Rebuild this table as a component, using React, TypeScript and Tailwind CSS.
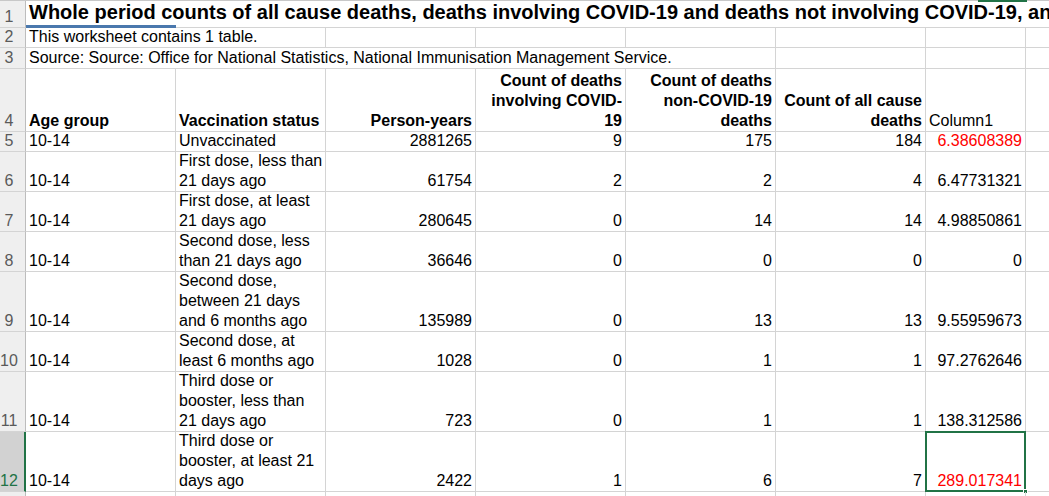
import React from "react";

// Worksheet column widths (A..G)
const COLS = ["w-[150px]", "w-[150px]", "w-[150px]", "w-[150px]", "w-[150px]", "w-[150px]", "w-[100px]"];

type Cell = {
  text?: React.ReactNode;
  align?: "left" | "right";
  bold?: boolean;
  red?: boolean;
};

type Row = {
  num: number;
  h: string;
  cells: Cell[];
  selected?: boolean;
};

const L = (t: React.ReactNode): Cell => ({ text: t, align: "left" });
const R = (t: React.ReactNode, red = false): Cell => ({ text: t, align: "right", red });

const rows: Row[] = [
  {
    num: 5,
    h: "h-[20px]",
    cells: [L("10-14"), L("Unvaccinated"), R("2881265"), R("9"), R("175"), R("184"), R("6.38608389", true)],
  },
  {
    num: 6,
    h: "h-[40px]",
    cells: [
      L("10-14"),
      L(<>First dose, less than<br />21 days ago</>),
      R("61754"),
      R("2"),
      R("2"),
      R("4"),
      R("6.47731321"),
    ],
  },
  {
    num: 7,
    h: "h-[40px]",
    cells: [
      L("10-14"),
      L(<>First dose, at least<br />21 days ago</>),
      R("280645"),
      R("0"),
      R("14"),
      R("14"),
      R("4.98850861"),
    ],
  },
  {
    num: 8,
    h: "h-[40px]",
    cells: [
      L("10-14"),
      L(<>Second dose, less<br />than 21 days ago</>),
      R("36646"),
      R("0"),
      R("0"),
      R("0"),
      R("0"),
    ],
  },
  {
    num: 9,
    h: "h-[60px]",
    cells: [
      L("10-14"),
      L(<>Second dose,<br />between 21 days<br />and 6 months ago</>),
      R("135989"),
      R("0"),
      R("13"),
      R("13"),
      R("9.55959673"),
    ],
  },
  {
    num: 10,
    h: "h-[40px]",
    cells: [
      L("10-14"),
      L(<>Second dose, at<br />least 6 months ago</>),
      R("1028"),
      R("0"),
      R("1"),
      R("1"),
      R("97.2762646"),
    ],
  },
  {
    num: 11,
    h: "h-[60px]",
    cells: [
      L("10-14"),
      L(<>Third dose or<br />booster, less than<br />21 days ago</>),
      R("723"),
      R("0"),
      R("1"),
      R("1"),
      R("138.312586"),
    ],
  },
  {
    num: 12,
    h: "h-[60px]",
    selected: true,
    cells: [
      L("10-14"),
      L(<>Third dose or<br />booster, at least 21<br />days ago</>),
      R("2422"),
      R("1"),
      R("6"),
      R("7"),
      R("289.017341", true),
    ],
  },
];

function RowHead({ num, selected }: { num?: number; selected?: boolean }) {
  return (
    <div
      className={`w-[26px] shrink-0 flex items-end border-b border-b-[#d4d4d4] ${
        selected
          ? "bg-[#d2d2d2] text-[#217346] border-r-2 border-r-[#217346]"
          : "bg-[#efefef] text-[#5a5a5a] border-r border-r-[#bdbdbd]"
      }`}
    >
      <span className="w-[18px] text-center">{num}</span>
    </div>
  );
}

function GridCell({ cell, w, selected }: { cell?: Cell; w: string; selected?: boolean }) {
  return (
    <div
      className={`${w} shrink-0 relative flex items-end px-[3px] border-r border-b border-[#d4d4d4] ${
        cell?.align === "right" ? "justify-end text-right" : "justify-start"
      } ${cell?.bold ? "font-bold" : ""} ${cell?.red ? "text-[#ff0000]" : "text-black"}`}
    >
      <span className="whitespace-nowrap">{cell?.text}</span>
      {selected && (
        <>
          <div className="absolute left-[-1px] top-[-1px] right-[-1px] bottom-[-1px] border-2 border-[#217346]" />
          <div className="absolute right-[-3px] bottom-[-3px] w-[5px] h-[5px] bg-[#217346] border border-white" />
        </>
      )}
    </div>
  );
}

export default function App() {
  const headers: Cell[] = [
    { text: "Age group", align: "left", bold: true },
    { text: "Vaccination status", align: "left", bold: true },
    { text: "Person-years", align: "right", bold: true },
    { text: <>Count of deaths<br />involving COVID-<br />19</>, align: "right", bold: true },
    { text: <>Count of deaths<br />non-COVID-19<br />deaths</>, align: "right", bold: true },
    { text: <>Count of all cause<br />deaths</>, align: "right", bold: true },
    { text: "Column1", align: "left" },
  ];

  return (
    <div
      className="w-[1049px] h-[496px] overflow-hidden bg-white relative text-[16px] leading-[20px]"
      style={{ fontFamily: '"Liberation Sans", Arial, sans-serif' }}
    >
      {/* top frame line */}
      <div className="h-px bg-[#c8c8c8] relative">
        <div className="absolute left-[978px] w-[49px] top-0 h-[2px] bg-[#217346]" />
      </div>

      {/* Row 1: title */}
      <div className="flex h-[27px]">
        <RowHead num={1} />
        <div className="flex-1 relative border-b border-[#d4d4d4]">
          <div className="absolute left-0 bottom-[-1px] w-[150px] h-[3px] bg-[#4a78ad]" />
          <span className="absolute left-[3px] bottom-[3px] whitespace-nowrap font-bold text-[20px] leading-[24px] text-black">
            Whole period counts of all cause deaths, deaths involving COVID-19 and deaths not involving COVID-19, and
            deaths by vaccination status
          </span>
        </div>
      </div>

      {/* Row 2 */}
      <div className="flex h-[20px]">
        <RowHead num={2} />
        <div className="w-[300px] shrink-0 relative border-r border-b border-[#d4d4d4] flex items-end px-[3px]">
          <span className="whitespace-nowrap">This worksheet contains 1 table.</span>
        </div>
        {COLS.slice(2).map((w, i) => (
          <GridCell key={i} w={w} />
        ))}
        <div className="flex-1 border-b border-[#d4d4d4]" />
      </div>

      {/* Row 3 */}
      <div className="flex h-[21px]">
        <RowHead num={3} />
        <div className="w-[750px] shrink-0 relative border-r border-b border-[#d4d4d4] flex items-end px-[3px]">
          <span className="whitespace-nowrap">
            Source: Source: Office for National Statistics, National Immunisation Management Service.
          </span>
        </div>
        {COLS.slice(5).map((w, i) => (
          <GridCell key={i} w={w} />
        ))}
        <div className="flex-1 border-b border-[#d4d4d4]" />
      </div>

      {/* Row 4: headers */}
      <div className="flex h-[63px]">
        <RowHead num={4} />
        {COLS.map((w, i) => (
          <GridCell key={i} w={w} cell={headers[i]} />
        ))}
        <div className="flex-1 border-b border-[#d4d4d4]" />
      </div>

      {rows.map((r) => (
        <div key={r.num} className={`flex ${r.h}`}>
          <RowHead num={r.num} selected={r.selected} />
          {COLS.map((w, i) => (
            <GridCell key={i} w={w} cell={r.cells[i]} selected={r.selected && i === 6} />
          ))}
          <div className="flex-1 border-b border-[#d4d4d4]" />
        </div>
      ))}

      {/* Row 13 (only its top edge is visible) */}
      <div className="flex h-[20px]">
        <RowHead />
        {COLS.map((w, i) => (
          <GridCell key={i} w={w} />
        ))}
      </div>
    </div>
  );
}
